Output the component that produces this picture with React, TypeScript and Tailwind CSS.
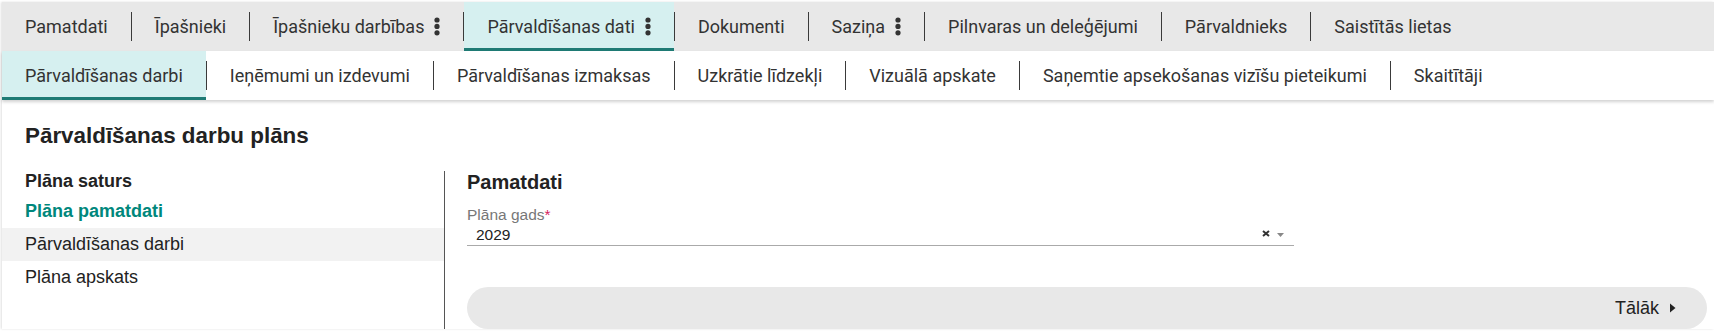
import React from 'react';

const topTabs = [
  { label: 'Pamatdati' },
  { label: 'Īpašnieki' },
  { label: 'Īpašnieku darbības', menu: true },
  { label: 'Pārvaldīšanas dati', menu: true, active: true },
  { label: 'Dokumenti' },
  { label: 'Saziņa', menu: true },
  { label: 'Pilnvaras un deleģējumi' },
  { label: 'Pārvaldnieks' },
  { label: 'Saistītās lietas' },
];

const subTabs = [
  { label: 'Pārvaldīšanas darbi', active: true },
  { label: 'Ieņēmumi un izdevumi' },
  { label: 'Pārvaldīšanas izmaksas' },
  { label: 'Uzkrātie līdzekļi' },
  { label: 'Vizuālā apskate' },
  { label: 'Saņemtie apsekošanas vizīšu pieteikumi' },
  { label: 'Skaitītāji' },
];

type Tab = { label: string; menu?: boolean; active?: boolean };

// vertical "more" dots next to tabs with a submenu
const Dots = () => (
  <svg width="6" height="19" viewBox="0 0 6 19" className="ml-[10px] fill-[#333]">
    <circle cx="3" cy="3" r="2.6" />
    <circle cx="3" cy="9.4" r="2.6" />
    <circle cx="3" cy="15.8" r="2.6" />
  </svg>
);

const Sep = () => <div className="h-[29px] w-px shrink-0 bg-[#3a3a3a]" />;

const TabBar = ({ tabs, className }: { tabs: Tab[]; className: string }) => (
  <div className={className}>
    {tabs.map((tab, i) => (
      <React.Fragment key={tab.label}>
        {i > 0 && <Sep />}
        <div
          className={
            tab.active
              ? 'flex h-full items-center border-b-[3px] border-[#1f7b75] bg-[#d6f0f0] px-[23px] pt-[3px]'
              : 'flex h-full items-center px-[23px]'
          }
        >
          <span>{tab.label}</span>
          {tab.menu && <Dots />}
        </div>
      </React.Fragment>
    ))}
  </div>
);

const App: React.FC = () => {
  return (
    <div
      className="min-h-[334px] w-[1714px] bg-white pl-[2px] pt-[2px]"
      style={{ fontFamily: '"Liberation Sans", Arial, sans-serif' }}
    >
      <div className="shadow-[-1px_0_2px_rgba(0,0,0,0.12)]">
        <div
          className="text-[18px] text-[#333]"
          style={{ fontFamily: 'Roboto, "Liberation Sans", sans-serif' }}
        >
          <TabBar tabs={topTabs} className="flex h-[49px] items-center bg-[#e8e8e8]" />
          <TabBar
            tabs={subTabs}
            className="relative flex h-[49px] items-center bg-white shadow-[0_2px_3px_rgba(0,0,0,0.18)]"
          />
        </div>

        <h1 className="mt-[23px] pl-[23px] text-[22.4px] font-bold leading-[26px] text-[#222]">
          Pārvaldīšanas darbu plāns
        </h1>

        <div className="mt-[22px] flex">
          <div className="w-[443px] shrink-0 border-r border-[#555] text-[18px] text-[#222]">
            <div className="mb-[3px] pl-[23px] font-bold leading-[21px]">Plāna saturs</div>
            <div className="flex h-[33px] items-center pl-[23px] font-bold text-[#00877c]">Plāna pamatdati</div>
            <div className="flex h-[33px] items-center bg-[#f2f2f2] pl-[23px]">Pārvaldīšanas darbi</div>
            <div className="flex h-[33px] items-center pl-[23px]">Plāna apskats</div>
          </div>

          <div className="w-[1262px] pl-[22px]">
            <div className="text-[20px] font-bold leading-[23px] text-[#222]">Pamatdati</div>
            <div className="mt-[12px] w-2/3">
              <div className="text-[15.5px] leading-[18px] text-[#777]">
                Plāna gads<span className="text-[#d6245f]">*</span>
              </div>
              <div className="flex items-center border-b border-[#aaa] pb-[1px] pl-[9px] pr-[10px] pt-[2px] text-[15.5px] leading-[18px] text-[#222]">
                <span className="flex-1">2029</span>
                <svg width="8" height="7" viewBox="0 0 8 7" className="mt-[-4px] stroke-[#333]">
                  <path d="M1 1l6 5M7 1L1 6" strokeWidth="2" />
                </svg>
                <svg width="7" height="4" viewBox="0 0 7 4" className="ml-[7px] fill-[#888]">
                  <path d="M0 0h7L3.5 4z" />
                </svg>
              </div>
            </div>

            <div className="mt-[41px] flex h-[42px] items-center justify-end rounded-full bg-[#e8e8e8] pr-[31px] text-[18px] text-[#222]">
              <span>Tālāk</span>
              <svg width="6" height="10" viewBox="0 0 6 10" className="ml-[11px] fill-[#222]">
                <path d="M0 0.5l5.5 4.5L0 9.5z" />
              </svg>
            </div>
          </div>
        </div>
      </div>
    </div>
  );
};

export default App;
